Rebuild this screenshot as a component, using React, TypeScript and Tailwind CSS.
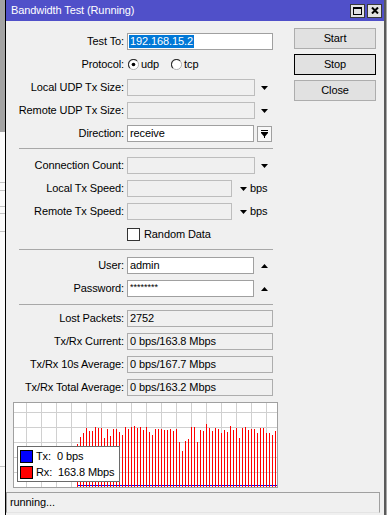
import React from "react";

const tops = [148,125,115,100,108,108,97,100,98,128,102,122,102,102,112,120,97,102,95,93,100,97,105,97,112,120,102,102,102,105,105,102,107,102,140,168,138,133,97,97,140,105,108,87,100,108,100,102,113,105,112,93,105,100,128,100,97,105,102,102,113,100,100,115,115,120,107];

function Down() {
  return (
    <svg width="7" height="4" viewBox="0 0 7 4" className="block">
      <polygon points="0,0 7,0 3.5,4" fill="#000" />
    </svg>
  );
}

function Up() {
  return (
    <svg width="7" height="4" viewBox="0 0 7 4" className="block">
      <polygon points="0,4 7,4 3.5,0" fill="#000" />
    </svg>
  );
}

function Radio({ checked }: { checked?: boolean }) {
  return (
    <svg width="11" height="11" viewBox="0 0 12 12" className="block">
      <circle cx="6" cy="6" r="5.5" fill="#fff" stroke="#a8a8a8" strokeWidth="1" />
      <path d="M 2.1 9.9 A 5.5 5.5 0 0 1 9.9 2.1" fill="none" stroke="#333" strokeWidth="1.2" />
      {checked && <circle cx="6" cy="6" r="2" fill="#000" />}
    </svg>
  );
}

function Label({ children }: { children: React.ReactNode }) {
  return <div className="w-[118px] shrink-0 whitespace-nowrap text-right">{children}</div>;
}

function Sep() {
  return <div className="ml-[13px] h-px w-[254px] bg-[#a8a8a8]" />;
}

function Chart() {
  const vlines = [];
  for (let j = 0; j < 18; j++) vlines.push(12 + 15 * j);
  const hlines = [9, 24, 39, 54, 69];
  return (
    <svg width="263" height="84" viewBox="0 0 263 84" className="block">
      <rect x="0" y="0" width="263" height="84" fill="#fff" />
      {vlines.map((x) => (
        <rect key={"v" + x} x={x} y="0" width="1" height="84" fill="#d0d0d0" />
      ))}
      {hlines.map((y) => (
        <rect key={"h" + y} x="0" y={y} width="263" height="1" fill="#d0d0d0" />
      ))}
      {tops.map((t, k) => {
        const top = Math.round(t / 3 - 8);
        return <rect key={"b" + k} x={63 + 3 * k} y={top} width="1" height={84 - top} fill="#ff0000" />;
      })}
      {tops.map((_, k) => (
        <rect key={"t" + k} x={64 + 3 * k} y="82" width="2" height="1" fill="#0000ff" />
      ))}
    </svg>
  );
}

export default function App() {
  return (
    <div className="flex h-[515px] w-[387px] overflow-hidden bg-[#f0f0f0] font-['Liberation_Sans',Arial,sans-serif] text-[11px] tracking-[-0.1px] text-black">
      {/* background strip of window behind */}
      <div className="flex w-[5px] shrink-0 flex-col bg-[#fbfbfb]">
        <div className="h-[132px] bg-[#a3a3a3]" />
        <div className="mt-[50px] h-px bg-[#c4c4c4]" />
        <div className="mt-[7px] h-px bg-[#c4c4c4]" />
        <div className="mt-[15px] h-px bg-[#c4c4c4]" />
        <div className="mt-[6px] h-px bg-[#c4c4c4]" />
        <div className="mt-[17px] h-px bg-[#c4c4c4]" />
        <div className="mt-[234px] h-px bg-[#c4c4c4]" />
      </div>
      <div className="w-px shrink-0 bg-black" />

      {/* window */}
      <div className="flex w-[378px] shrink-0 flex-col">
        {/* title bar */}
        <div className="flex h-[21px] items-center bg-[#5050c9] pl-[5px] pr-[2px]">
          <div className="flex-1 text-white">Bandwidth Test (Running)</div>
          <div className="flex items-center gap-[2px]">
            <div className="flex h-[14px] w-[15px] items-center justify-center border border-[#3a3a3a] bg-[#e2e2e2]">
              <svg width="9" height="8" viewBox="0 0 9 8" className="block">
                <rect x="0.5" y="0.5" width="8" height="7" fill="none" stroke="#000" strokeWidth="1" />
                <rect x="0" y="0" width="9" height="2" fill="#000" />
              </svg>
            </div>
            <div className="flex h-[14px] w-[15px] items-center justify-center border border-[#3a3a3a] bg-[#e2e2e2]">
              <svg width="8" height="7" viewBox="0 0 8 7" className="block">
                <path d="M1 0.5 L7 6.5 M7 0.5 L1 6.5" stroke="#000" strokeWidth="2" />
              </svg>
            </div>
          </div>
        </div>

        {/* body */}
        <div className="flex">
          {/* form */}
          <div className="flex w-[270px] shrink-0 flex-col pt-[12px]">
            <div className="flex h-[17px] items-center">
              <Label>Test To:</Label>
              <div className="ml-[3px] flex h-[17px] w-[146px] items-center border border-[#a0a0a0] bg-white pl-[1px]">
                <span className="bg-[#0078d7] px-[1px] leading-[13px] text-white">192.168.15.2</span>
              </div>
            </div>

            <div className="mt-[6px] flex h-[17px] items-center">
              <Label>Protocol:</Label>
              <div className="ml-[4px] flex items-center">
                <Radio checked />
                <span className="ml-[2px]">udp</span>
                <div className="ml-[12px]">
                  <Radio />
                </div>
                <span className="ml-[2px]">tcp</span>
              </div>
            </div>

            <div className="mt-[6px] flex h-[17px] items-center">
              <Label>Local UDP Tx Size:</Label>
              <div className="ml-[3px] h-[17px] w-[128px] border border-[#bdbdbd]" />
              <div className="ml-[6px]">
                <Down />
              </div>
            </div>

            <div className="mt-[6px] flex h-[17px] items-center">
              <Label>Remote UDP Tx Size:</Label>
              <div className="ml-[3px] h-[17px] w-[128px] border border-[#bdbdbd]" />
              <div className="ml-[6px]">
                <Down />
              </div>
            </div>

            <div className="mt-[6px] flex h-[17px] items-center">
              <Label>Direction:</Label>
              <div className="ml-[3px] flex h-[17px] w-[127px] items-center border border-[#a0a0a0] bg-white pl-[2px]">receive</div>
              <div className="ml-[3px] flex h-[16px] w-[15px] items-center justify-center border border-[#a0a0a0] bg-[#f8f8f8]">
                <svg width="7" height="8" viewBox="0 0 7 8" className="block">
                  <rect x="0" y="0" width="7" height="1" fill="#000" />
                  <rect x="0" y="2" width="7" height="1" fill="#000" />
                  <polygon points="0,3 7,3 3.5,7" fill="#000" />
                  <rect x="3" y="6" width="1" height="2" fill="#000" />
                </svg>
              </div>
            </div>

            <div className="mt-[6px]">
              <Sep />
            </div>

            <div className="mt-[8px] flex h-[17px] items-center">
              <Label>Connection Count:</Label>
              <div className="ml-[3px] h-[17px] w-[128px] border border-[#bdbdbd]" />
              <div className="ml-[6px]">
                <Down />
              </div>
            </div>

            <div className="mt-[6px] flex h-[17px] items-center">
              <Label>Local Tx Speed:</Label>
              <div className="ml-[3px] h-[17px] w-[105px] border border-[#bdbdbd]" />
              <div className="ml-[8px]">
                <Down />
              </div>
              <span className="ml-[3px]">bps</span>
            </div>

            <div className="mt-[6px] flex h-[17px] items-center">
              <Label>Remote Tx Speed:</Label>
              <div className="ml-[3px] h-[17px] w-[105px] border border-[#bdbdbd]" />
              <div className="ml-[8px]">
                <Down />
              </div>
              <span className="ml-[3px]">bps</span>
            </div>

            <div className="mt-[6px] flex h-[17px] items-center">
              <div className="w-[118px] shrink-0" />
              <div className="ml-[3px] h-[13px] w-[13px] border border-[#333] bg-white" />
              <span className="ml-[4px]">Random Data</span>
            </div>

            <div className="mt-[6px]">
              <Sep />
            </div>

            <div className="mt-[7px] flex h-[17px] items-center">
              <Label>User:</Label>
              <div className="ml-[3px] flex h-[17px] w-[127px] items-center border border-[#a0a0a0] bg-white pl-[2px]">admin</div>
              <div className="ml-[7px]">
                <Up />
              </div>
            </div>

            <div className="mt-[6px] flex h-[17px] items-center">
              <Label>Password:</Label>
              <div className="ml-[3px] flex h-[17px] w-[127px] items-start border border-[#a0a0a0] bg-white pl-[2px] pt-[1px] text-[9px] leading-[10px] tracking-[0px]">********</div>
              <div className="ml-[7px]">
                <Up />
              </div>
            </div>

            <div className="mt-[7px]">
              <Sep />
            </div>

            <div className="mt-[5px] flex h-[17px] items-center">
              <Label>Lost Packets:</Label>
              <div className="ml-[3px] flex h-[17px] w-[146px] items-center border border-[#adadad] pl-[2px]">2752</div>
            </div>

            <div className="mt-[6px] flex h-[17px] items-center">
              <Label>Tx/Rx Current:</Label>
              <div className="ml-[3px] flex h-[17px] w-[146px] items-center border border-[#adadad] pl-[2px]">0 bps/163.8 Mbps</div>
            </div>

            <div className="mt-[6px] flex h-[17px] items-center">
              <Label>Tx/Rx 10s Average:</Label>
              <div className="ml-[3px] flex h-[17px] w-[146px] items-center border border-[#adadad] pl-[2px]">0 bps/167.7 Mbps</div>
            </div>

            <div className="mt-[6px] flex h-[17px] items-center">
              <Label>Tx/Rx Total Average:</Label>
              <div className="ml-[3px] flex h-[17px] w-[146px] items-center border border-[#adadad] pl-[2px]">0 bps/163.2 Mbps</div>
            </div>
          </div>

          {/* buttons */}
          <div className="ml-[18px] flex w-[82px] flex-col pt-[7px]">
            <div className="flex h-[21px] items-center justify-center border border-[#adadad] bg-[#e1e1e1]">Start</div>
            <div className="mt-[5px] flex h-[21px] items-center justify-center border border-black bg-[#e1e1e1]">Stop</div>
            <div className="mt-[5px] flex h-[21px] items-center justify-center border border-[#adadad] bg-[#e1e1e1]">Close</div>
          </div>
        </div>

        {/* graph */}
        <div className="relative ml-[7px] mt-[6px] h-[86px] w-[265px] border border-[#a0a0a0]">
          <Chart />
          <div className="absolute left-[3px] top-[43px] flex h-[36px] w-[103px] flex-col justify-center gap-[3px] border border-[#6a6a6a] bg-white pl-[2px]">
            <div className="flex h-[13px] items-center">
              <div className="h-[13px] w-[13px] border border-black bg-[#0000ff]" />
              <span className="ml-[3px] w-[21px]">Tx:</span>
              <span>0 bps</span>
            </div>
            <div className="flex h-[13px] items-center">
              <div className="h-[13px] w-[13px] border border-black bg-[#ff0000]" />
              <span className="ml-[3px] w-[22px]">Rx:</span>
              <span>163.8 Mbps</span>
            </div>
          </div>
        </div>

        {/* status bar */}
        <div className="mt-[4px] flex h-[21px] w-[374px] items-center border border-[#a0a0a0] border-b-[#e4e4e4] pl-[3px]">
          running...
        </div>
      </div>

      <div className="w-[2px] shrink-0 bg-[#5a5a5a]" />
      <div className="w-px shrink-0 bg-[#a8a8a8]" />
    </div>
  );
}
